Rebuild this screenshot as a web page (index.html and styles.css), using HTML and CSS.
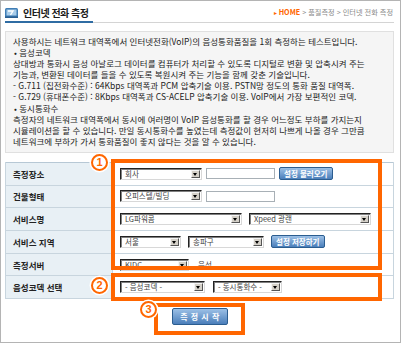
FILE: index.html
```html
<!DOCTYPE html>
<html lang="ko">
<head>
  <meta charset="UTF-8" />
  <meta name="viewport" content="width=device-width, initial-scale=1.0"/>
  <title>인터넷 전화 측정</title>
  <link rel="stylesheet" href="styles.css">
</head>
<body>

  <div class="page">
    <div class="head">
      <h1 class="title">
        <svg class="title-icon" width="13" height="10" viewBox="0 0 13 10">
          <rect x="0" y="0" width="13" height="10" rx="1.5" fill="#3f7db5"/>
          <rect x="1.5" y="1.5" width="10" height="6" fill="#a9cdea"/>
          <path d="M3 3 H8 L5.5 7" fill="none" stroke="#fff" stroke-width="1.4"/>
          <rect x="0" y="8.5" width="13" height="1.5" fill="#2b5f91"/>
        </svg>
        인터넷 전화 측정
      </h1>
      <div class="crumb">
        <span class="crumb-arrow">▸</span> <span class="crumb-home">HOME</span> &gt; 품질측정 &gt; 인터넷 전화 측정
      </div>
    </div>

    <div class="desc">
      <p>사용하시는 네트워크 대역폭에서 인터넷전화(VoIP)의 음성통화품질을 1회 측정하는 테스트입니다.</p>
      <p class="bullet">• 음성코덱</p>
      <p>상대방과 통화시 음성 아날로그 데이터를 컴퓨터가 처리할 수 있도록 디지털로 변환 및 압축시켜 주는<br>
        기능과, 변환된 데이터를 들을 수 있도록 복원시켜 주는 기능을 함께 갖춘 기술입니다.</p>
      <p>- G.711 (집전화수준) : 64Kbps 대역폭과 PCM 압축기술 이용. PSTN망 정도의 통화 품질 대역폭.</p>
      <p>- G.729 (휴대폰수준) : 8Kbps 대역폭과 CS-ACELP 압축기술 이용. VoIP에서 가장 보편적인 코덱.</p>
      <p class="bullet">• 동시통화수</p>
      <p>측정자의 네트워크 대역폭에서 동시에 여러명이 VoIP 음성통화를 할 경우 어느정도 부하를 가지는지<br>
        시뮬레이션을 할 수 있습니다. 만일 동시통화수를 높였는데 측정값이 현저히 나쁘게 나올 경우 그만큼<br>
        네트워크에 부하가 가서 통화품질이 좋지 않다는 것을 알 수 있습니다.</p>
    </div>

    <table class="form">
      <tr>
        <th>측정장소</th>
        <td>
          <div class="field">
            <span class="sel sel-place"><span class="sel-val">회사</span><span class="sel-arrow"></span></span>
            <span class="input"></span>
            <button class="btn">설정 불러오기</button>
          </div>
        </td>
      </tr>
      <tr>
        <th>건물형태</th>
        <td>
          <div class="field">
            <span class="sel sel-place"><span class="sel-val">오피스텔/빌딩</span><span class="sel-arrow"></span></span>
            <span class="input"></span>
          </div>
        </td>
      </tr>
      <tr>
        <th>서비스명</th>
        <td>
          <div class="field field-wide">
            <span class="sel sel-long"><span class="sel-val">LG파워콤</span><span class="sel-arrow"></span></span>
            <span class="sel sel-long"><span class="sel-val">Xpeed 광랜</span><span class="sel-arrow"></span></span>
          </div>
        </td>
      </tr>
      <tr>
        <th>서비스 지역</th>
        <td>
          <div class="field field-area">
            <span class="sel sel-city"><span class="sel-val">서울</span><span class="sel-arrow"></span></span>
            <span class="sel sel-gu"><span class="sel-val">송파구</span><span class="sel-arrow"></span></span>
            <button class="btn">설정 저장하기</button>
          </div>
        </td>
      </tr>
      <tr>
        <th>측정서버</th>
        <td>
          <div class="field field-server">
            <span class="sel sel-server"><span class="sel-val">KIDC</span><span class="sel-arrow"></span></span>
            <span class="note">음성</span>
          </div>
        </td>
      </tr>
      <tr>
        <th>음성코덱 선택</th>
        <td>
          <div class="field field-codec">
            <span class="sel sel-codec"><span class="sel-val">- 음성코덱 -</span><span class="sel-arrow"></span></span>
            <span class="sel sel-count"><span class="sel-val">- 동시통화수 -</span><span class="sel-arrow"></span></span>
          </div>
        </td>
      </tr>
    </table>

    <div class="actions">
      <button class="btn btn-start">측 정 시 작</button>
    </div>

    <!-- 안내용 표시 -->
    <div class="mark-box mark-box-1"></div>
    <div class="mark-box mark-box-2"></div>
    <div class="mark-box mark-box-3"></div>
    <span class="mark-num mark-num-1">1</span>
    <span class="mark-num mark-num-2">2</span>
    <span class="mark-num mark-num-3">3</span>
  </div>

</body>
</html>
```

FILE: styles.css
```css
/* 전체 */
body {
  margin: 0;
}

.page {
  position: relative;
  width: 401px;
  height: 343px;
  box-sizing: border-box;
  padding: 0 6px 0 4px;
  border: 1px solid #b4b4b4;
  background: #fff;
  font-family: "Noto Sans CJK KR", "Noto Sans", sans-serif;
  color: #222;
  overflow: hidden;
}

/* 제목 영역 */
.head {
  display: flex;
  justify-content: space-between;
  align-items: flex-end;
  height: 21px;
  border-bottom: 1px solid #d4d4d4;
}

.title {
  display: flex;
  align-items: center;
  gap: 5px;
  margin: 0 0 -1px;
  padding: 0 4px 2px 0;
  font-size: 10px;
  line-height: 12px;
  font-weight: bold;
  color: #1a1a1a;
  letter-spacing: -0.5px;
  border-bottom: 2px solid #2f6ca3;
}

.title-icon {
  display: block;
}

.crumb {
  padding: 0 1px 4px 0;
  font-size: 7.2px;
  line-height: 10px;
  color: #8a8a8a;
}
.crumb-arrow {
  color: #ff6600;
  font-size: 6px;
}
.crumb-home {
  color: #ff6600;
  font-weight: bold;
}

/* 설명 박스 */
.desc {
  margin-top: 8px;
  padding: 4px 6px 5px 7px;
  border: 1px solid #e0e0e0;
  background: #f5f5f5;
  font-size: 8.5px;
  line-height: 11.1px;
  white-space: nowrap;
  color: #222;
}
.desc p {
  margin: 0;
}
.desc .bullet {
  padding-left: 1px;
}

/* 입력 폼 */
.form {
  width: 100%;
  margin-top: 9px;
  border-collapse: collapse;
  border-top: 1px solid #b7c8d5;
}
.form th,
.form td {
  height: 21.7px;
  padding: 0;
  border-bottom: 1px solid #c8d5de;
  border-right: 1px solid #c8d5de;
}
.form th {
  width: 99px;
  padding-left: 7px;
  border-left: 1px solid #c8d5de;
  background: #e8f0f5;
  text-align: left;
  font-size: 8.5px;
  font-weight: bold;
  color: #222;
}
.form td {
  padding-left: 7px;
}

.field {
  display: flex;
  align-items: center;
  gap: 4px;
}
.field-wide {
  gap: 7px;
}
.field-area {
  gap: 7px;
}
.field-server {
  gap: 9px;
}
.field-codec {
  gap: 8px;
}

/* 셀렉트 박스 */
.sel {
  display: inline-flex;
  align-items: stretch;
  box-sizing: border-box;
  height: 12px;
  border: 1px solid;
  border-color: #222 #d8d8d8 #d8d8d8 #222;
  box-shadow: inset 1px 1px 0 #808080;
  background: #fff;
}
.sel-val {
  flex: 1;
  padding-left: 4px;
  font-size: 7.5px;
  line-height: 10px;
  color: #444;
  white-space: nowrap;
  overflow: hidden;
}
.sel-arrow {
  position: relative;
  width: 9px;
  margin: 1px 1px 1px 0;
  box-sizing: border-box;
  border: 1px solid;
  border-color: #f4f4f4 #555 #555 #f4f4f4;
  background: #d4d0c8;
}
.sel-arrow::after {
  content: "";
  position: absolute;
  left: 1px;
  top: 2px;
  border-style: solid;
  border-width: 3px 2.5px 0 2.5px;
  border-color: #000 transparent transparent transparent;
}

.sel-place { width: 82px; }
.sel-long { width: 122px; }
.sel-city { width: 61px; }
.sel-gu { width: 76px; }
.sel-server { width: 69px; }
.sel-codec { width: 85px; }
.sel-count { width: 69px; }

.input {
  display: inline-block;
  box-sizing: border-box;
  width: 69px;
  height: 11px;
  border: 1px solid #a8b0b6;
  background: #fff;
}

.note {
  font-size: 7.5px;
  color: #444;
}

/* 버튼 */
.btn {
  box-sizing: border-box;
  height: 13px;
  padding: 0 4px;
  border: 1px solid #2b5d90;
  border-radius: 2px;
  background: linear-gradient(#9cc0e6, #4a7eba);
  color: #fff;
  font-family: inherit;
  font-size: 7.5px;
  font-weight: bold;
  line-height: 10px;
  white-space: nowrap;
  cursor: pointer;
}

.actions {
  display: flex;
  justify-content: center;
  margin-top: 9px;
  padding-left: 1px;
}
.btn-start {
  width: 56px;
  height: 17px;
  font-size: 8px;
  letter-spacing: 0.5px;
}

/* 번호 표시 */
.mark-box {
  position: absolute;
  box-sizing: border-box;
  border: 4px solid #ff6600;
}
.mark-box-1 { left: 110px; top: 158px; width: 271px; height: 111px; }
.mark-box-2 { left: 110px; top: 272px; width: 271px; height: 28px; }
.mark-box-3 { left: 153px; top: 302px; width: 91px; height: 32px; }

.mark-num {
  position: absolute;
  box-sizing: border-box;
  width: 17px;
  height: 17px;
  border: 2px solid #ff6600;
  border-radius: 50%;
  background: #fff;
  color: #ff6600;
  font-family: "Liberation Sans", Arial, sans-serif;
  font-size: 11px;
  font-weight: bold;
  line-height: 13px;
  text-align: center;
  box-shadow: 0 0 0 1.5px #fff;
}
.mark-num-1 { left: 90px; top: 153px; }
.mark-num-2 { left: 90px; top: 276px; }
.mark-num-3 { left: 139px; top: 300px; }
```
